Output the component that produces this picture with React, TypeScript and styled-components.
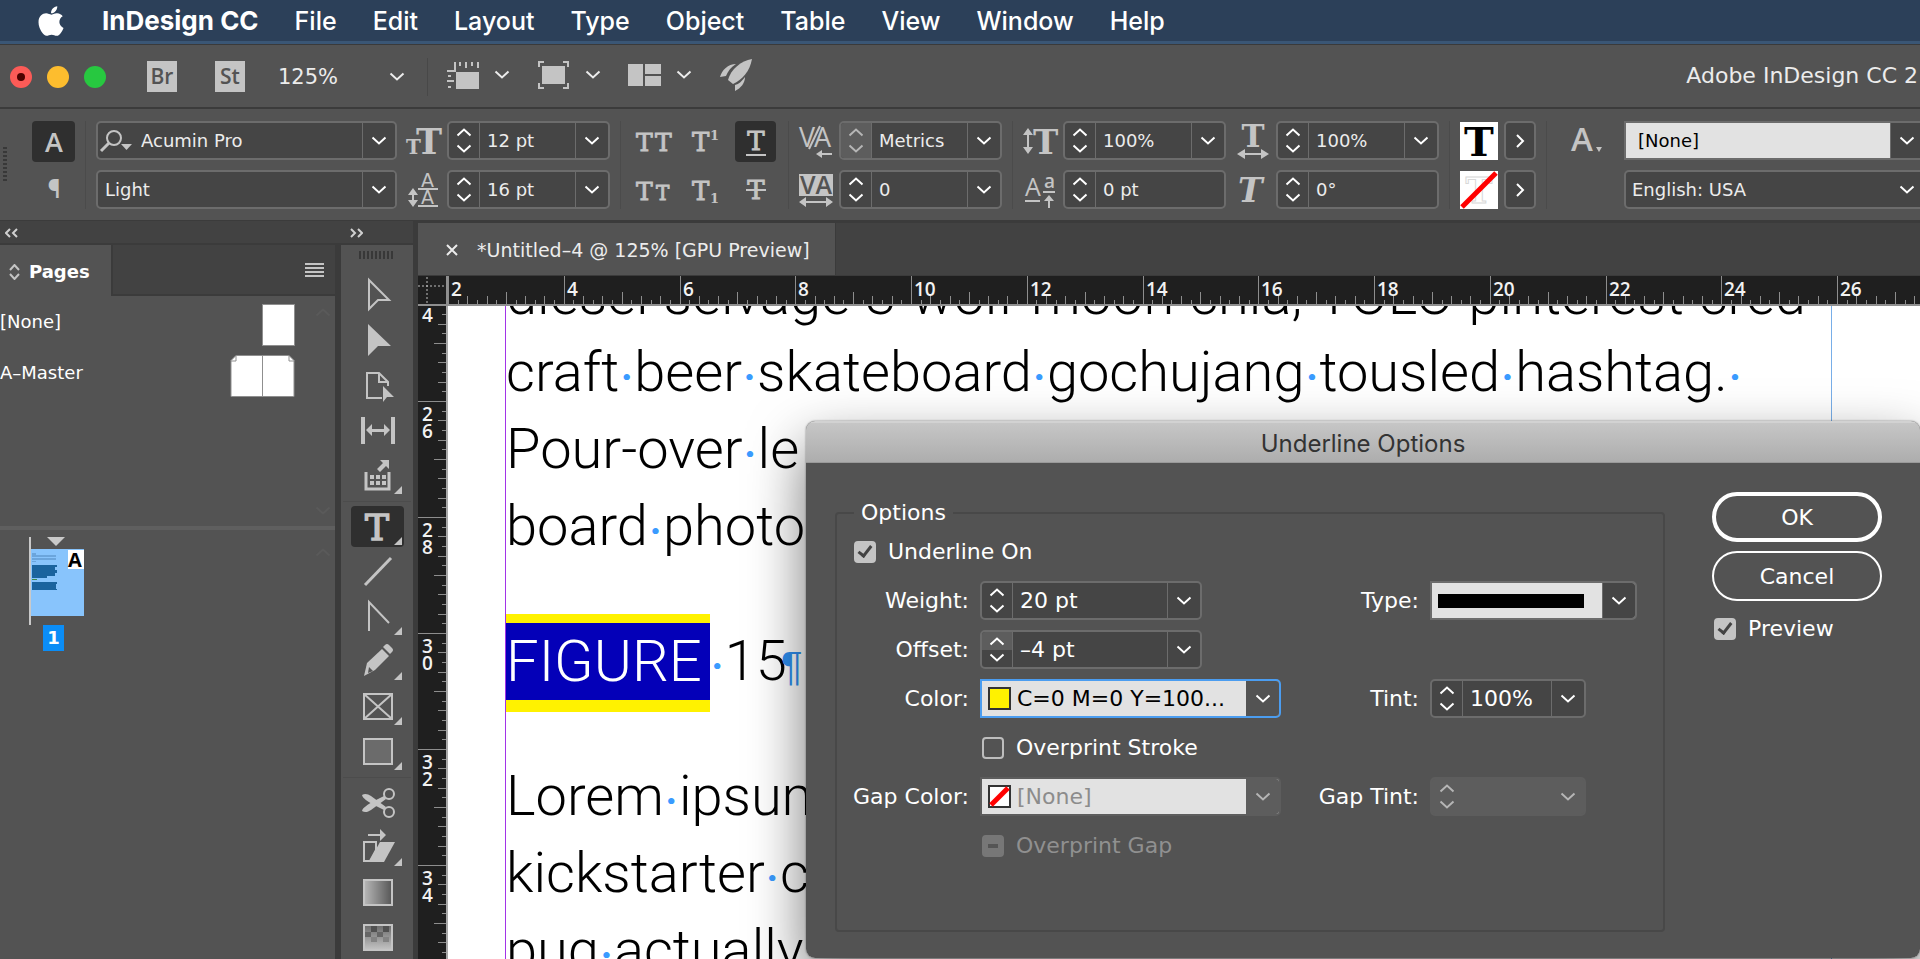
import React from "react";
import styled, { createGlobalStyle, css } from "styled-components";
import { FaApple } from "react-icons/fa";

const UI_FONT = `"DejaVu Sans", "Noto Sans", sans-serif`;
const NARROW_FONT = `"Open Sans", "Noto Sans", sans-serif`;
const SYSTEM_FONT = `Inter, Roboto, sans-serif`;
const ICON_SERIF = `"DejaVu Serif", "Liberation Serif", serif`;

const color = {
  panel: "#535353",
  well: "#424242",
  field: "#454545",
  line: "#3b3b3b",
  border: "#6c6c6c",
  icon: "#c4c4c4",
  text: "#ececec",
  active: "#2f2f2f",
  light: "#e2e2e2",
};

const GlobalStyle = createGlobalStyle`
  *, *::before, *::after { box-sizing: border-box; }
  body { margin: 0; background: ${color.panel}; overflow: hidden; }
  button, input, select { font: inherit; color: inherit; margin: 0; }
  button { border: 0; padding: 0; background: none; }
`;

const Shell = styled.div`
  display: flex;
  flex-direction: column;
  height: 100vh;
  overflow: hidden;
  background: ${color.panel};
  color: ${color.text};
  font-family: ${UI_FONT};
  font-size: 18px;
  line-height: 26px;
`;

/* ---------- system menu bar ---------- */

const MenuBar = styled.nav`
  display: flex;
  flex: none;
  align-items: center;
  gap: 36px;
  height: 44px;
  padding: 1px 0 0 36px;
  background: #2c4059;
  border-bottom: 3px solid #3a5675;
  color: #fff;
  font-family: ${SYSTEM_FONT};
  font-size: 25px;
  font-weight: 500;
  white-space: nowrap;
`;

const AppleMenu = styled.button`
  display: flex;
  width: 30px;
  font-size: 34px;
`;

const MenuItem = styled.button<{ $bold?: boolean }>`
  ${(p) => p.$bold && "font-size: 26px; font-weight: 700;"}
`;

/* ---------- application bar ---------- */

const AppBar = styled.header`
  display: flex;
  flex: none;
  align-items: center;
  height: 65px;
  padding: 1px 2px 0 10px;
  border-top: 1px solid #3a3a3a;
  border-bottom: 2px solid ${color.line};
`;

const WindowButtons = styled.div`
  display: flex;
  gap: 15px;
  margin-right: 41px;
`;

const WindowButton = styled.button<{ $fill: string; $dot?: boolean }>`
  display: grid;
  place-items: center;
  width: 22px;
  height: 22px;
  border-radius: 50%;
  background: ${(p) => p.$fill};
  ${(p) =>
    p.$dot &&
    css`
      &::after {
        content: "";
        width: 8px;
        height: 8px;
        border-radius: 50%;
        background: #4d0200;
      }
    `}
`;

const AppLinks = styled.div`
  display: flex;
  gap: 38px;
  margin-right: 33px;
`;

const AppLink = styled.button`
  width: 30px;
  height: 31px;
  background: ${color.icon};
  color: ${color.panel};
  font-family: ${NARROW_FONT};
  font-size: 21px;
  font-weight: 600;
  line-height: 31px;
`;

const ZoomBox = styled.div`
  display: grid;
  grid-template-columns: 1fr 14px;
  align-items: center;
  width: 125px;
  margin-right: 24px;
  font-size: 21px;
`;

const BareSelect = styled.select`
  grid-column: 1 / -1;
  grid-row: 1;
  width: 100%;
  padding: 0;
  border: 0;
  background: none;
  appearance: none;
`;

const OverSelect = styled.span`
  display: grid;
  grid-column: 2;
  grid-row: 1;
  place-items: center;
  pointer-events: none;
`;

const BarDivider = styled.i`
  width: 1px;
  height: 38px;
  margin-right: 18px;
  background: #484848;
`;

const ViewTools = styled.div`
  display: flex;
  align-items: center;
  gap: 27px;
  margin-bottom: 3px;
`;

const ViewButton = styled.button`
  display: flex;
  align-items: center;
  gap: 15px;
`;

const WindowTitle = styled.h1`
  margin: 0 0 2px auto;
  font-size: 22px;
  font-weight: 400;
  white-space: nowrap;
`;

/* ---------- control panel ---------- */

const ControlBar = styled.section`
  display: flex;
  flex: none;
  align-items: center;
  height: 112px;
  padding: 1px 0 0 3px;
  border-bottom: 1px solid ${color.line};
`;

const Grip = styled.i<{ $vertical?: boolean }>`
  flex: none;
  ${(p) =>
    p.$vertical
      ? css`
          width: 4px;
          height: 36px;
          margin-right: 25px;
          background: repeating-linear-gradient(#383838 0 2px, transparent 2px 4px);
        `
      : css`
          width: 36px;
          height: 8px;
          margin: 6px 0 14px;
          background: repeating-linear-gradient(90deg, #383838 0 2px, transparent 2px 4px);
        `}
`;

const Column = styled.div<{ $width?: number; $grow?: boolean }>`
  display: grid;
  grid-template-rows: 39px 39px;
  gap: 10px;
  flex: ${(p) => (p.$grow ? "1 1 0" : "none")};
  width: ${(p) => (p.$width ? `${p.$width}px` : "auto")};
  ${(p) => p.$grow && "margin-right: -5px;"}
`;

const IconColumn = styled(Column)<{ $before?: number; $after?: number }>`
  place-items: center;
  margin-left: ${(p) => p.$before ?? 0}px;
  margin-right: ${(p) => p.$after ?? 6}px;
`;

const Rule = styled.i`
  flex: none;
  width: 1px;
  height: 88px;
  margin: 0 10px;
  background: #4b4b4b;
`;

const ToggleGrid = styled.div`
  display: grid;
  grid-template: 39px 39px / repeat(3, 41px);
  gap: 10px;
  padding: 0 2px;
`;

const Toggle = styled.button<{ $on?: boolean }>`
  display: grid;
  place-items: center;
  width: 100%;
  height: 41px;
  border-radius: 4px;
  background: ${(p) => (p.$on ? color.active : "none")};
`;

/* ---------- fields ---------- */

const FieldBox = styled.div<{ $disabled?: boolean; $width?: number; $light?: boolean; $focus?: boolean }>`
  display: flex;
  width: ${(p) => (p.$width ? `${p.$width}px` : "100%")};
  height: 39px;
  overflow: hidden;
  border: 2px solid ${(p) => (p.$focus ? "#4b9df0" : p.$disabled ? "#5d5d5d" : color.border)};
  border-radius: ${(p) => (p.$light ? "0 5px 5px 0" : "5px")};
  background: ${(p) => (p.$disabled ? "#5d5d5d" : color.field)};
`;

const TextInput = styled.input<{ $pad?: number }>`
  flex: 1;
  min-width: 0;
  padding: 1px 0 0 ${(p) => p.$pad ?? 7}px;
  border: 0;
  background: none;
`;

const Stepper = styled.div<{ $dim?: boolean; $line?: boolean }>`
  display: grid;
  grid-template-rows: 1fr 1fr;
  flex: none;
  width: 31px;
  border-right: 1px solid ${(p) => (p.$line === false ? "transparent" : color.border)};
  background: ${(p) => (p.$dim ? "#5d5d5d" : "none")};
  color: ${(p) => (p.$dim ? "#b5b5b5" : "#fff")};
`;

const StepButton = styled.button<{ $hot?: boolean }>`
  display: grid;
  place-items: center;
  background: ${(p) => (p.$hot ? "#5d5d5d" : "none")};
`;

const DropButton = styled.button<{ $line?: boolean; $dim?: boolean }>`
  display: grid;
  flex: none;
  place-items: center;
  width: 33px;
  border-left: 1px solid ${(p) => (p.$line === false ? "transparent" : color.border)};
  color: ${(p) => (p.$dim ? "#b5b5b5" : "#fff")};
`;

const SelectGrid = styled.div`
  display: grid;
  grid-template-columns: 1fr 33px;
  flex: 1;
`;

const FieldSelect = styled(BareSelect)<{ $pad: number; $light?: boolean; $muted?: boolean }>`
  height: 35px;
  padding: 1px 0 0 ${(p) => p.$pad}px;
  border-radius: 0;
  opacity: 1;
  ${(p) =>
    p.$light &&
    css`
      background: ${color.light};
      color: ${p.$muted ? "#8c8c8c" : "#000"};
    `}
`;

const SelectArrow = styled(OverSelect)<{ $fill: string; $line?: boolean; $dim?: boolean }>`
  border-left: 1px solid ${(p) => (p.$line ? color.border : "transparent")};
  background: ${(p) => p.$fill};
  color: ${(p) => (p.$dim ? "#b5b5b5" : "#fff")};
`;

const SelectMark = styled.span`
  display: flex;
  grid-column: 1;
  grid-row: 1;
  align-items: center;
  padding-left: 6px;
  pointer-events: none;
`;

const StrokeSample = styled.i`
  width: 146px;
  height: 14px;
  background: #000;
`;

const SearchMark = styled.span`
  display: flex;
  align-items: center;
  padding-left: 2px;
`;

const FlyoutButton = styled.button`
  display: grid;
  place-items: center;
  width: 32px;
  height: 39px;
  border: 2px solid ${color.border};
  border-radius: 5px;
  background: ${color.field};
`;

/* ---------- workspace ---------- */

const Workspace = styled.div`
  display: flex;
  flex: 1;
  min-height: 0;
`;

const Dock = styled.aside`
  display: flex;
  flex: none;
  flex-direction: column;
  width: 418px;
  border-right: 5px solid ${color.line};
`;

const DockHeader = styled.div`
  display: flex;
  flex: none;
  align-items: center;
  justify-content: space-between;
  height: 24px;
  padding: 1px 50px 0 5px;
  border-bottom: 2px solid ${color.line};
  background: ${color.well};
`;

const DockBody = styled.div`
  display: flex;
  flex: 1;
  min-height: 0;
`;

const PagesPanel = styled.section`
  display: flex;
  flex-direction: column;
  width: 335px;
`;

const PanelTabs = styled.div`
  display: flex;
  flex: none;
  height: 51px;
`;

const PanelTab = styled.button`
  display: flex;
  align-items: center;
  gap: 9px;
  width: 111px;
  padding: 3px 0 0 9px;
  color: #fff;
  font-weight: 700;
`;

const TabSpace = styled.div`
  display: flex;
  flex: 1;
  align-items: center;
  justify-content: flex-end;
  padding: 4px 11px 0 0;
  border-left: 2px solid ${color.line};
  border-bottom: 2px solid ${color.line};
  background: ${color.well};
`;

const Masters = styled.div`
  display: flex;
  height: 230px;
  padding: 3px 3px 0 0;
`;

const MasterList = styled.ul`
  flex: 1;
  margin: 0;
  padding: 0;
  list-style: none;
`;

const MasterRow = styled.li`
  display: flex;
  align-items: center;
  justify-content: space-between;
  height: 51px;
  color: #fff;
`;

const MasterName = styled.span`
  padding-bottom: 6px;
`;

const ScrollHints = styled.div`
  display: flex;
  flex-direction: column;
  justify-content: space-between;
  width: 37px;
  padding: 8px 0 10px 20px;
  color: #5a5a5a;
`;

const PagesSplit = styled.hr`
  width: 100%;
  height: 4px;
  margin: 0;
  border: 0;
  background: #5f5f5f;
`;

const PageArea = styled.div`
  display: flex;
  justify-content: space-between;
  padding: 7px 3px 0 29px;
`;

const NextPageHint = styled.div`
  width: 17px;
  padding-top: 1px;
  color: #5a5a5a;
`;

const PageItem = styled.div`
  display: flex;
  flex-direction: column;
  align-items: flex-start;
`;

const PageNumber = styled.span`
  width: 21px;
  margin-left: 14px;
  background: #0b8df6;
  color: #fff;
  font-weight: 700;
  text-align: center;
`;

const ToolPanel = styled.div`
  display: flex;
  flex: 1;
  flex-direction: column;
  align-items: center;
  border-left: 6px solid ${color.line};
`;

const ToolGroup = styled.div`
  display: flex;
  flex: none;
  flex-direction: column;
  align-items: center;
  width: 68px;
  & + & {
    margin-top: 3px;
    padding-top: 2px;
    border-top: 1px solid #4c4c4c;
  }
`;

const ToolButton = styled.button<{ $on?: boolean }>`
  display: grid;
  place-items: center;
  width: 53px;
  height: 41px;
  margin: 2px 0;
  border-radius: 4px;
  background: ${(p) => (p.$on ? color.active : "none")};
`;

/* ---------- document ---------- */

const DocumentArea = styled.main`
  position: relative;
  display: flex;
  flex: 1;
  flex-direction: column;
  min-width: 0;
  background: ${color.well};
`;

const DocTabs = styled.div`
  display: flex;
  flex: none;
  height: 55px;
  border-top: 2px solid ${color.line};
  border-bottom: 1px solid ${color.line};
`;

const DocTab = styled.div`
  display: flex;
  align-items: center;
  gap: 19px;
  width: 418px;
  padding: 1px 0 0 28px;
  border-right: 1px solid ${color.line};
  background: ${color.panel};
  font-size: 19px;
  white-space: nowrap;
`;

const CloseTab = styled.button`
  display: flex;
`;

const RulerGrid = styled.div`
  display: grid;
  grid-template: 30px 1fr / 30px 1fr;
  flex: 1;
  min-height: 0;
  background: #1f1f1f;
`;

const RulerSvg = styled.svg`
  display: block;
  width: 100%;
  height: 100%;
  overflow: hidden;
  font-family: ${NARROW_FONT};
  font-size: 19px;
  font-weight: 600;
`;

const RulerTrack = styled.div<{ $side?: boolean }>`
  min-width: 0;
  min-height: 0;
  overflow: hidden;
  ${(p) => (p.$side ? "border-right: 2px solid #a9a9a9;" : "border-bottom: 2px solid #8f8f8f;")}
`;

const Page = styled.article`
  min-width: 0;
  min-height: 0;
  overflow: hidden;
  padding-left: 57px;
  background: #fff;
`;

const TextFrame = styled.div`
  width: 1327px;
  height: 100%;
  overflow: hidden;
  border-left: 1px solid #a233e8;
  border-right: 1px solid #78aee8;
  color: #000;
  font-family: Roboto, "Liberation Sans", sans-serif;
  font-size: 56px;
  font-weight: 300;
  line-height: 77px;
  white-space: nowrap;
`;

const Paragraph = styled.p<{ $first?: boolean }>`
  margin: ${(p) => (p.$first ? "-49px" : "0")} 0 58px;
`;

const Dot = styled.span`
  display: inline-block;
  width: 15px;
  color: #3a9bff;
  font-size: 40px;
  font-weight: 700;
  line-height: 50px;
  text-align: center;
`;

const Selection = styled.mark`
  display: inline-block;
  height: 77px;
  padding-right: 8px;
  background: #0400b8;
  box-shadow: 0 -9px #fff200, 0 12px #fff200;
  color: #fff;
  font-size: 58px;
  vertical-align: top;
`;

const Pilcrow = styled.span`
  margin-left: -6px;
  color: #2f8ff0;
  font-family: "Liberation Sans", Arial, sans-serif;
  font-size: 40px;
  font-weight: 400;
  line-height: 50px;
`;

/* ---------- dialog ---------- */

const Dialog = styled.div`
  position: absolute;
  top: 200px;
  right: 0;
  display: flex;
  flex-direction: column;
  width: 1114px;
  height: 537px;
  overflow: hidden;
  border-radius: 9px;
  background: ${color.panel};
  color: #fff;
  font-size: 22px;
`;

const DialogShadow = styled.div`
  position: absolute;
  top: 115px;
  right: 0;
  width: 1114px;
  height: 537px;
  border-radius: 9px;
  box-shadow: 0 24px 56px rgba(0, 0, 0, 0.55), 0 0 2px rgba(0, 0, 0, 0.5);
`;

const ShadowClip = styled.div`
  position: absolute;
  inset: 85px 0 0 30px;
  overflow: hidden;
  pointer-events: none;
`;

const DialogTitle = styled.h2`
  flex: none;
  height: 42px;
  margin: 0;
  padding-top: 1px;
  border-top: 2px solid #d2d2d2;
  border-bottom: 1px solid #9a9a9a;
  background: linear-gradient(#c6c6c6, #adadad);
  color: #333;
  font-family: ${SYSTEM_FONT};
  font-size: 24px;
  font-weight: 400;
  line-height: 40px;
  text-align: center;
`;

const DialogBody = styled.form`
  display: flex;
  flex: 1;
  align-items: flex-start;
  gap: 47px;
  padding: 37px 38px 29px 29px;
`;

const OptionsGroup = styled.fieldset`
  flex: 1;
  height: 432px;
  min-width: 0;
  margin: 0;
  padding: 0 0 0 15px;
  border: 2px solid #484848;
  border-radius: 4px;
`;

const Legend = styled.legend`
  margin-left: 2px;
  padding: 0 7px;
  line-height: 26px;
`;

const OptionsGrid = styled.div`
  display: grid;
  grid-template-columns: 117px 301px 127px 1fr;
  grid-auto-rows: 39px;
  gap: 10px 11px;
  align-items: center;
  margin-top: 6px;
`;

const FieldLabel = styled.label`
  justify-self: end;
  white-space: nowrap;
`;

const CheckLabel = styled.label<{ $from?: number; $span?: number; $dim?: boolean }>`
  display: flex;
  grid-column: ${(p) => `${p.$from ?? 1} / span ${p.$span ?? 1}`};
  align-items: center;
  gap: 12px;
  padding-left: 2px;
  color: ${(p) => (p.$dim ? "#909090" : "#fff")};
`;

const CheckBox = styled.input<{ $mixed?: boolean }>`
  display: grid;
  place-items: center;
  width: 22px;
  height: 22px;
  border: 2px solid #bdbdbd;
  border-radius: 4px;
  appearance: none;
  &:checked {
    border-color: #c4c4c4;
    background: #c4c4c4;
  }
  &:checked::after {
    content: "";
    width: 8px;
    height: 14px;
    margin-bottom: 4px;
    border: solid #434343;
    border-width: 0 3px 3px 0;
    transform: rotate(38deg);
  }
  ${(p) =>
    p.$mixed &&
    css`
      border-color: #777;
      background: #777;
      &::after {
        content: "";
        width: 10px;
        height: 4px;
        background: #555;
      }
    `}
`;

const DialogActions = styled.div`
  display: flex;
  flex: none;
  flex-direction: column;
  gap: 9px;
  width: 170px;
  margin-top: -8px;
`;

const PillButton = styled.button<{ $primary?: boolean }>`
  height: 50px;
  padding-top: 1px;
  border: ${(p) => (p.$primary ? 4 : 2)}px solid #fff;
  border-radius: 25px;
`;

const PreviewRow = styled(CheckLabel)`
  margin-top: 6px;
`;

/* ---------- icons ---------- */

const Drawing = styled.svg`
  overflow: visible;
`;

const Glyph = ({ w, h, children }: { w: number; h: number; children: React.ReactNode }) => (
  <Drawing width={w} height={h} viewBox={`0 0 ${w} ${h}`} fill={color.icon} aria-hidden="true">
    {children}
  </Drawing>
);

const Chevron = ({ up }: { up?: boolean }) => (
  <svg width="16" height="10" viewBox="0 0 16 10" fill="none" stroke="currentColor" strokeWidth="2" aria-hidden="true">
    <path d={up ? "M1.500 8.500 8 2.500l6.500 6" : "M1.500 1.500 8 7.500l6.500-6"} />
  </svg>
);

const stroke = { fill: "none", stroke: color.icon, strokeWidth: 2 };
const slab = { fontFamily: ICON_SERIF, stroke: color.icon, strokeWidth: 0.9 };

const RulersIcon = () => (
  <Glyph w={33} h={28}>
    <rect x="10" y="11" width="23" height="17" />
    <path d="M1 10h8V1" {...stroke} />
    <path d="M14 1v4M20 1v6M26 1v4M32 1v6M2 15h3M1 20h7M2 26h3" {...stroke} />
  </Glyph>
);

const ScreenModeIcon = () => (
  <Glyph w={33} h={28}>
    <rect x="5" y="5" width="23" height="18" />
    <path d="M7 1H2v5M26 1h5v5M7 27H2v-5M26 27h5v-5" {...stroke} />
  </Glyph>
);

const ArrangeIcon = () => (
  <Glyph w={33} h={22}>
    <path d="M0 0h15v22H0zM17 0h16v10H17zM17 12h16v10H17z" />
  </Glyph>
);

const RocketIcon = () => (
  <Glyph w={34} h={34}>
    <path d="M33 1C22 3 12 11 9 22l5 4c9-4 17-13 19-25Z" />
    <path d="M17 6C9 6 3 12 1 19l6-1c2-5 5-9 10-12ZM26 19c-3 4-6 7-10 8v6c6-3 10-8 10-14Z" />
  </Glyph>
);

const SearchIcon = () => (
  <Glyph w={34} h={24}>
    <circle cx="14" cy="9" r="7" {...stroke} />
    <path d="M9 14 1 22" {...stroke} strokeWidth={3} />
    <path d="M21 15h11l-5.500 6z" />
  </Glyph>
);

const SizeIcon = () => (
  <Glyph w={34} h={32}>
    <text x="-1" y="29" fontFamily={ICON_SERIF} fontWeight="700" fontSize="20">T</text>
    <text x="9" y="29" fontFamily={ICON_SERIF} fontWeight="700" fontSize="35">T</text>
  </Glyph>
);

const UpDown = ({ x, y1, y2 }: { x: number; y1: number; y2: number }) => (
  <path d={`M${x} ${y1}l5 7h-4v${y2 - y1 - 14}h4l-5 7-5-7h4v-${y2 - y1 - 14}h-4z`} />
);

const LeadingIcon = () => (
  <Glyph w={34} h={36}>
    <UpDown x={6} y1={16} y2={35} />
    <text x="14" y="15" fontFamily={UI_FONT} fontSize="19">A</text>
    <text x="14" y="32" fontFamily={UI_FONT} fontSize="19">A</text>
    <path d="M11 17h20M11 34h20" {...stroke} />
  </Glyph>
);

const PairIcon = ({ smallSize }: { smallSize: number }) => (
  <Glyph w={38} h={34}>
    <text x="1" y="26" fontSize="25" {...slab}>T</text>
    <text x={smallSize < 25 ? 21 : 20} y="26" fontSize={smallSize} {...slab}>T</text>
  </Glyph>
);

const ScriptIcon = ({ low }: { low?: boolean }) => (
  <Glyph w={38} h={34}>
    <text x="6" y="26" fontSize="26" {...slab}>T</text>
    <text x="24" y={low ? 29 : 15} fontFamily={ICON_SERIF} fontWeight="700" fontSize="13">1</text>
  </Glyph>
);

const LineTIcon = ({ strike }: { strike?: boolean }) => (
  <Glyph w={30} h={34}>
    <text x="15" y="25" textAnchor="middle" fontSize="26" {...slab}>T</text>
    <path d={strike ? "M5 16h20" : "M5 30h20"} {...stroke} />
  </Glyph>
);

const KerningIcon = () => (
  <Glyph w={34} h={36}>
    <text x="0" y="24" fontFamily={NARROW_FONT} fontSize="27">V</text>
    <text x="15" y="24" fontFamily={NARROW_FONT} fontSize="27">A</text>
    <path d="M21 3 10 26" {...stroke} />
    <path d="M17 31l6-4v3h10v2H23v3z" />
  </Glyph>
);

const TrackingIcon = () => (
  <Glyph w={34} h={36}>
    <rect width="34" height="22" y="2" />
    <text x="17" y="22" textAnchor="middle" fontFamily={NARROW_FONT} fontWeight="600" fontSize="25" fill={color.panel}>VA</text>
    <path d="M0 30l7-5v4h20v-4l7 5-7 5v-4H7v4z" />
  </Glyph>
);

const VerticalScaleIcon = () => (
  <Glyph w={34} h={32}>
    <UpDown x={5} y1={3} y2={29} />
    <text x="10" y="29" fontFamily={ICON_SERIF} fontWeight="700" fontSize="34">T</text>
  </Glyph>
);

const HorizontalScaleIcon = () => (
  <Glyph w={34} h={36}>
    <text x="17" y="24" textAnchor="middle" fontFamily={ICON_SERIF} fontWeight="700" fontSize="31">T</text>
    <path d="M1 31l8-5v4h16v-4l8 5-8 5v-4H9v4z" />
  </Glyph>
);

const BaselineIcon = () => (
  <Glyph w={34} h={36}>
    <text x="2" y="24" fontFamily={NARROW_FONT} fontSize="25">A</text>
    <text x="21" y="16" fontFamily={NARROW_FONT} fontWeight="600" fontSize="19">a</text>
    <path d="M2 29h15M20 20h12" {...stroke} />
    <path d="M26 23l5 6h-4v7h-2v-7h-4z" />
  </Glyph>
);

const SkewIcon = () => (
  <Glyph w={34} h={32}>
    <text x="2" y="28" fontFamily={ICON_SERIF} fontStyle="italic" fontWeight="700" fontSize="33">T</text>
  </Glyph>
);

const FillSwatch = () => (
  <Drawing width="38" height="38" viewBox="0 0 38 38" aria-label="Fill">
    <rect width="38" height="38" fill="#fff" />
    <text x="19" y="34" textAnchor="middle" fontFamily={ICON_SERIF} fontWeight="700" fontSize="40">T</text>
  </Drawing>
);

const StrokeSwatch = () => (
  <Drawing width="38" height="38" viewBox="0 0 38 38" aria-label="Stroke">
    <rect width="38" height="38" fill="#fff" />
    <text x="19" y="32" textAnchor="middle" fontFamily={ICON_SERIF} fontWeight="700" fontSize="36" fill="#fff" stroke="#d8d8d8">T</text>
    <path d="M2 36 36 2" stroke="#f00" strokeWidth="5" />
  </Drawing>
);

const CharStyleIcon = () => (
  <Glyph w={36} h={32}>
    <text x="2" y="26" fontFamily={NARROW_FONT} fontWeight="600" fontSize="33">A</text>
    <path d="M27 22h6l-3 5z" />
  </Glyph>
);

const Swatch = ({ none }: { none?: boolean }) => (
  <svg width="23" height="23" viewBox="0 0 23 23" aria-hidden="true">
    <rect x="1" y="1" width="21" height="21" fill={none ? "#fff" : "#fff200"} stroke="#333" strokeWidth="2" />
    {none && <path d="M3 20 20 3" stroke="#f00" strokeWidth="5" />}
  </svg>
);

const DoubleChevron = ({ right }: { right?: boolean }) => (
  <svg width="13" height="10" viewBox="0 0 13 10" fill="none" stroke="#d0d0d0" strokeWidth="2" aria-hidden="true">
    <path d={right ? "M1 1l4 4-4 4M8 1l4 4-4 4" : "M5 1 1 5l4 4M12 1 8 5l4 4"} />
  </svg>
);

const tool = (children: React.ReactNode, corner?: boolean) => (
  <Glyph w={53} h={41}>
    {children}
    {corner && <path d="M51 31v8h-8z" />}
  </Glyph>
);

const tools: { name: string; on?: boolean; art: React.ReactNode }[][] = [
  [
    { name: "Selection", art: tool(<path d="M18 5v29l9-9h11z" {...stroke} />) },
    { name: "Direct Selection", art: tool(<path d="M17 4v32l10-10h13z" />) },
    {
      name: "Page",
      art: tool(
        <>
          <path d="M31 33H16V8h12l9 9v4M28 8v9h9" {...stroke} />
          <path d="M32 21v16l4-5h7z" />
        </>
      ),
    },
    {
      name: "Gap",
      art: tool(
        <>
          <path d="M10 7h4v27h-4zM40 7h4v27h-4z" />
          <path d="M15 20l6-6v5h12v-5l6 6-6 6v-4H21v4z" />
        </>
      ),
    },
    {
      name: "Content Collector",
      art: tool(
        <>
          <path d="M15 17v17h23V17" {...stroke} strokeWidth={3} />
          <path d="M19 20h4v4h-4zM25 20h4v4h-4zM31 20h4v4h-4zM19 26h4v4h-4zM25 26h4v4h-4zM31 26h4v4h-4z" />
          <path d="M29 5h9v9l-3-3-6 6-3-3 6-6z" />
        </>,
        true
      ),
    },
  ],
  [
    {
      name: "Type",
      on: true,
      art: tool(
        <text x="26" y="34" textAnchor="middle" fontSize="36" fontFamily={ICON_SERIF} stroke={color.icon} strokeWidth="1.500">T</text>,
        true
      ),
    },
    { name: "Line", art: tool(<path d="M14 34 40 7" {...stroke} strokeWidth={3} />) },
    { name: "Pen", art: tool(<path d="M18 35V6l20 21" {...stroke} />, true) },
    {
      name: "Pencil",
      art: tool(
        <>
          <path d="M13 35l3-13L31 8l7 7-14 14z" />
          <path d="M32 6l2-2q2-2 4 0l3 3q2 2 0 4l-2 2z" />
          <path d="M18 26l4 4-5 2z" fill={color.panel} />
        </>,
        true
      ),
    },
    {
      name: "Rectangle Frame",
      art: tool(<path d="M13 8h28v25H13zM13 8l28 25M41 8 13 33" {...stroke} />, true),
    },
    { name: "Rectangle", art: tool(<rect x="13" y="8" width="28" height="25" {...stroke} fill="#6b6b6b" />, true) },
  ],
  [
    {
      name: "Scissors",
      art: tool(
        <>
          <circle cx="38" cy="12" r="5" {...stroke} />
          <circle cx="38" cy="30" r="5" {...stroke} />
          <path d="M11 13c3-2 6-1 9 1l15 11-2 3-12-6C17 19 12 17 11 13Z" />
          <path d="M11 29c3 2 6 1 9-1l15-11-2-3-12 6c-4 3-9 5-10 9Z" />
        </>
      ),
    },
    {
      name: "Free Transform",
      art: tool(
        <>
          <path d="M25 15H13v19h6l6-11z" {...stroke} />
          <path d="M29 15h15L33 35H18z" />
          <path d="M17 7h12V2l6 6-6 6V9H17z" />
        </>,
        true
      ),
    },
    {
      name: "Gradient Swatch",
      art: tool(
        <>
          <defs>
            <linearGradient id="swatch">
              <stop offset="0" stopColor="#b8b8b8" />
              <stop offset="1" stopColor="#565656" />
            </linearGradient>
          </defs>
          <rect x="13" y="8" width="28" height="25" {...stroke} fill="url(#swatch)" />
        </>
      ),
    },
    {
      name: "Gradient Feather",
      art: tool(
        <>
          <defs>
            <linearGradient id="feather" x1="0" y1="0" x2="0" y2="1">
              <stop offset="0" stopColor="#6a6a6a" />
              <stop offset="1" stopColor={color.icon} />
            </linearGradient>
          </defs>
          <rect x="13" y="8" width="28" height="25" {...stroke} fill="url(#feather)" />
          <path d="M20 9h6v6h-6zM32 9h6v6h-6z" fill="#505050" />
          <path d="M14 15h6v5h-6zM26 15h6v5h-6z" fill="#666" />
          <path d="M20 20h6v5h-6zM32 20h6v5h-6z" fill="#838383" />
        </>
      ),
    },
  ],
];

const PageThumb = () => (
  <Drawing width="56" height="88" viewBox="0 0 56 88" aria-label="Page 1">
    <rect width="2" height="88" fill="#c9c9c9" />
    <path d="M18 0h18l-9 9z" fill="#c9c9c9" />
    <rect x="2" y="12" width="53" height="67" fill="#88c4fc" />
    <path d="M3 16h4v2h20v2H3zM3 21h24v2H3zM3 24h4v1H3z" fill="#6ba5dc" />
    <path d="M3 28h25v2h-2v3h2v3h-2v3H18v2H3z" fill="#1a639e" />
    <path d="M3 42h5v1H3z" fill="#3f8a4a" />
    <path d="M3 45h25v2h-1v5h1v1H3z" fill="#1a639e" />
    <rect x="39" y="13" width="16" height="19" fill="#fff" />
    <text x="46" y="30" textAnchor="middle" fontFamily={NARROW_FONT} fontWeight="700" fontSize="20">A</text>
  </Drawing>
);

/* ---------- rulers ---------- */

const MAJOR = 1389 / 12;
const SIDE_MAJOR = 116;
const tickLength = (i: number, full: number) => (i % 12 === 0 ? full : i % 6 === 0 ? 12 : i % 2 === 0 ? 8 : 4);

const TopRuler = () => (
  <RulerSvg>
    {Array.from({ length: 300 }, (_, i) => {
      const x = Math.round((i * MAJOR) / 12);
      return <rect key={i} x={x} y={28 - tickLength(i, 28)} width="1" height={tickLength(i, 28)} fill="#8d8d8d" />;
    })}
    {Array.from({ length: 13 }, (_, i) => (
      <text key={i} x={Math.round(i * MAJOR) + 3} y="20" fill="#f2f2f2">
        {2 + i * 2}
      </text>
    ))}
  </RulerSvg>
);

const SideRuler = () => (
  <RulerSvg>
    {Array.from({ length: 200 }, (_, i) => {
      const y = Math.round((i * SIDE_MAJOR) / 12) - 21;
      return <rect key={i} x={28 - tickLength(i, 28)} y={y} width={tickLength(i, 28)} height="1" fill="#8d8d8d" />;
    })}
    {Array.from({ length: 6 }, (_, i) =>
      String(24 + i * 2)
        .split("")
        .map((digit, j) =>
          i + j === 0 ? null : (
            <text key={`${i}-${j}`} x="4" y={i * SIDE_MAJOR + 17 * j - 1} fill="#f2f2f2">
              {digit}
            </text>
          )
        )
    )}
  </RulerSvg>
);

const RulerOrigin = () => (
  <svg width="30" height="30" viewBox="0 0 30 30" aria-hidden="true">
    <path d="M0 10h30M9 1v29" stroke="#c0c0c0" strokeDasharray="2 2" />
    <path d="M29 0v30M0 29h30" stroke="#8f8f8f" strokeWidth="2" />
  </svg>
);

/* ---------- composed fields ---------- */

const Steps = ({ label, dim, hot, line }: { label: string; dim?: boolean; hot?: boolean; line?: boolean }) => (
  <Stepper $dim={dim} $line={line}>
    <StepButton type="button" $hot={hot} aria-label={`Increase ${label}`}>
      <Chevron up />
    </StepButton>
    <StepButton type="button" aria-label={`Decrease ${label}`}>
      <Chevron />
    </StepButton>
  </Stepper>
);

interface NumberFieldProps {
  label: string;
  value: string;
  id?: string;
  width?: number;
  drop?: boolean;
  dimSteps?: boolean;
  hot?: boolean;
  disabled?: boolean;
}

const NumberField = ({ label, value, id, width = 163, drop = true, dimSteps, hot, disabled }: NumberFieldProps) => (
  <FieldBox $width={width} $disabled={disabled}>
    <Steps label={label} dim={dimSteps || disabled} hot={hot} line={!disabled} />
    <TextInput id={id} aria-label={id ? undefined : label} defaultValue={value} disabled={disabled} />
    {drop && (
      <DropButton type="button" aria-label={`${label} presets`} $line={!disabled} $dim={disabled}>
        <Chevron />
      </DropButton>
    )}
  </FieldBox>
);

interface SelectFieldProps {
  label: string;
  value: string;
  id?: string;
  width?: number;
  pad?: number;
  light?: boolean;
  line?: boolean;
  focus?: boolean;
  disabled?: boolean;
  mark?: React.ReactNode;
}

const SelectField = ({ label, value, id, width, pad = 7, light, line = true, focus, disabled, mark }: SelectFieldProps) => (
  <FieldBox $width={width} $light={light} $focus={focus} $disabled={disabled}>
    <SelectGrid>
      <FieldSelect id={id} aria-label={id ? undefined : label} $pad={pad} $light={light} $muted={disabled} disabled={disabled}>
        <option>{value}</option>
      </FieldSelect>
      {mark && <SelectMark>{mark}</SelectMark>}
      <SelectArrow $fill={disabled ? "#5d5d5d" : focus ? color.panel : color.field} $line={line} $dim={disabled}>
        <Chevron />
      </SelectArrow>
    </SelectGrid>
  </FieldBox>
);

const withDots = (line: string) =>
  line.split("·").map((word, i) => (
    <React.Fragment key={i}>
      {i > 0 && <Dot>·</Dot>}
      {word}
    </React.Fragment>
  ));

const menus = ["File", "Edit", "Layout", "Type", "Object", "Table", "View", "Window", "Help"];

export default function App() {
  return (
    <Shell>
      <GlobalStyle />
      <MenuBar>
        <AppleMenu aria-label="Apple menu">
          <FaApple />
        </AppleMenu>
        <MenuItem $bold>InDesign CC</MenuItem>
        {menus.map((m) => (
          <MenuItem key={m}>{m}</MenuItem>
        ))}
      </MenuBar>

      <AppBar>
        <WindowButtons>
          <WindowButton $fill="#fc5b57" $dot aria-label="Close" />
          <WindowButton $fill="#fdbd2e" aria-label="Minimize" />
          <WindowButton $fill="#27c840" aria-label="Zoom" />
        </WindowButtons>
        <AppLinks>
          <AppLink>Br</AppLink>
          <AppLink>St</AppLink>
        </AppLinks>
        <ZoomBox>
          <BareSelect aria-label="Zoom level">
            <option>125%</option>
          </BareSelect>
          <OverSelect>
            <Chevron />
          </OverSelect>
        </ZoomBox>
        <BarDivider />
        <ViewTools>
          <ViewButton aria-label="View options">
            <RulersIcon />
            <Chevron />
          </ViewButton>
          <ViewButton aria-label="Screen mode">
            <ScreenModeIcon />
            <Chevron />
          </ViewButton>
          <ViewButton aria-label="Arrange documents">
            <ArrangeIcon />
            <Chevron />
          </ViewButton>
          <ViewButton aria-label="Publish">
            <RocketIcon />
          </ViewButton>
        </ViewTools>
        <WindowTitle>Adobe InDesign CC 2</WindowTitle>
      </AppBar>

      <ControlBar>
        <Grip $vertical />
        <Column $width={43}>
          <Toggle $on aria-label="Character controls">
            <Glyph w={32} h={34}>
              <text x="16" y="27" textAnchor="middle" fontFamily={NARROW_FONT} fontWeight="600" fontSize="27">A</text>
            </Glyph>
          </Toggle>
          <Toggle aria-label="Paragraph controls">
            <Glyph w={32} h={34}>
              <text x="16" y="24" textAnchor="middle" fontFamily="Roboto, sans-serif" fontWeight="500" fontSize="26">¶</text>
            </Glyph>
          </Toggle>
        </Column>
        <Rule />
        <Column $width={301}>
          <FieldBox>
            <SearchMark>
              <SearchIcon />
            </SearchMark>
            <TextInput aria-label="Font family" defaultValue="Acumin Pro" />
            <DropButton aria-label="Font list">
              <Chevron />
            </DropButton>
          </FieldBox>
          <SelectField label="Font style" value="Light" />
        </Column>
        <IconColumn $width={34} $before={10}>
          <SizeIcon />
          <LeadingIcon />
        </IconColumn>
        <Column>
          <NumberField label="Font size" value="12 pt" />
          <NumberField label="Leading" value="16 pt" />
        </Column>
        <Rule />
        <ToggleGrid>
          <Toggle aria-label="All caps">
            <PairIcon smallSize={25} />
          </Toggle>
          <Toggle aria-label="Superscript">
            <ScriptIcon />
          </Toggle>
          <Toggle $on aria-label="Underline">
            <LineTIcon />
          </Toggle>
          <Toggle aria-label="Small caps">
            <PairIcon smallSize={20} />
          </Toggle>
          <Toggle aria-label="Subscript">
            <ScriptIcon low />
          </Toggle>
          <Toggle aria-label="Strikethrough">
            <LineTIcon strike />
          </Toggle>
        </ToggleGrid>
        <Rule />
        <IconColumn $width={34}>
          <KerningIcon />
          <TrackingIcon />
        </IconColumn>
        <Column>
          <NumberField label="Kerning" value="Metrics" dimSteps />
          <NumberField label="Tracking" value="0" />
        </Column>
        <Rule />
        <IconColumn $width={34}>
          <VerticalScaleIcon />
          <BaselineIcon />
        </IconColumn>
        <Column>
          <NumberField label="Vertical scale" value="100%" />
          <NumberField label="Baseline shift" value="0 pt" drop={false} />
        </Column>
        <IconColumn $width={34} $before={10}>
          <HorizontalScaleIcon />
          <SkewIcon />
        </IconColumn>
        <Column>
          <NumberField label="Horizontal scale" value="100%" />
          <NumberField label="Skew" value="0°" drop={false} />
        </Column>
        <Rule />
        <IconColumn $width={38}>
          <FillSwatch />
          <StrokeSwatch />
        </IconColumn>
        <Column>
          {["Fill options", "Stroke options"].map((name) => (
            <FlyoutButton key={name} aria-label={name}>
              <svg width="9" height="16" viewBox="0 0 9 16" fill="none" stroke="#fff" strokeWidth="2" aria-hidden="true">
                <path d="M1 2l6 6-6 6" />
              </svg>
            </FlyoutButton>
          ))}
        </Column>
        <Rule />
        <IconColumn $width={36} $before={12} $after={19}>
          <CharStyleIcon />
        </IconColumn>
        <Column $grow>
          <SelectField label="Character style" value="[None]" pad={12} light />
          <SelectField label="Language" value="English: USA" pad={6} line={false} />
        </Column>
      </ControlBar>

      <Workspace>
        <Dock>
          <DockHeader>
            <DoubleChevron />
            <DoubleChevron right />
          </DockHeader>
          <DockBody>
            <PagesPanel>
              <PanelTabs>
                <PanelTab>
                  <svg width="11" height="16" viewBox="0 0 11 16" {...stroke} aria-hidden="true">
                    <path d="M1 6l4.500-5L10 6M1 10l4.500 5 4.500-5" />
                  </svg>
                  Pages
                </PanelTab>
                <TabSpace>
                  <button aria-label="Panel menu">
                    <Glyph w={19} h={15}>
                      <path d="M0 0h19v2H0zM0 4h19v2H0zM0 8h19v2H0zM0 12h19v2H0z" />
                    </Glyph>
                  </button>
                </TabSpace>
              </PanelTabs>
              <Masters>
                <MasterList>
                  <MasterRow>
                    <MasterName>[None]</MasterName>
                    <svg width="33" height="42" viewBox="0 0 33 42" aria-hidden="true">
                      <rect x="0.500" y="0.500" width="32" height="41" fill="#fff" stroke="#8f8f8f" />
                    </svg>
                  </MasterRow>
                  <MasterRow>
                    <MasterName>A–Master</MasterName>
                    <svg width="65" height="42" viewBox="0 0 65 42" aria-hidden="true">
                      <path d="M6 .5h53l5 5v36H1v-36z" fill="#fff" stroke="#8f8f8f" />
                      <path d="M6 1v5H1M59 1v5h5M32.500 1v40" fill="none" stroke="#8f8f8f" />
                    </svg>
                  </MasterRow>
                </MasterList>
                <ScrollHints>
                  <Chevron up />
                  <Chevron />
                </ScrollHints>
              </Masters>
              <PagesSplit />
              <PageArea>
                <PageItem>
                  <PageThumb />
                  <PageNumber>1</PageNumber>
                </PageItem>
                <NextPageHint>
                  <Chevron up />
                </NextPageHint>
              </PageArea>
            </PagesPanel>
            <ToolPanel>
              <Grip />
              {tools.map((group, g) => (
                <ToolGroup key={g}>
                  {group.map((t) => (
                    <ToolButton key={t.name} $on={t.on} aria-label={`${t.name} tool`}>
                      {t.art}
                    </ToolButton>
                  ))}
                </ToolGroup>
              ))}
            </ToolPanel>
          </DockBody>
        </Dock>

        <DocumentArea>
          <DocTabs>
            <DocTab>
              <CloseTab aria-label="Close document">
                <svg width="12" height="12" viewBox="0 0 12 12" stroke="#ececec" strokeWidth="2" aria-hidden="true">
                  <path d="M1 1l10 10M11 1 1 11" />
                </svg>
              </CloseTab>
              *Untitled–4 @ 125% [GPU Preview]
            </DocTab>
          </DocTabs>
          <RulerGrid>
            <RulerOrigin />
            <RulerTrack>
              <TopRuler />
            </RulerTrack>
            <RulerTrack $side>
              <SideRuler />
            </RulerTrack>
            <Page>
              <TextFrame>
                <Paragraph $first>
                  {withDots("diesel·selvage·3·wolf·moon·chia,·YOLO·pinterest·cred")}
                  <br />
                  {withDots("craft·beer·skateboard·gochujang·tousled·hashtag.·")}
                  <br />
                  {withDots("Pour-over·le")}
                  <br />
                  {withDots("board·photo")}
                </Paragraph>
                <Paragraph>
                  <Selection>FIGURE</Selection>
                  <Dot>·</Dot>15<Pilcrow>¶</Pilcrow>
                </Paragraph>
                <Paragraph>
                  {withDots("Lorem·ipsum")}
                  <br />
                  {withDots("kickstarter·c")}
                  <br />
                  {withDots("pug·actually")}
                </Paragraph>
              </TextFrame>
            </Page>
          </RulerGrid>

          <ShadowClip>
            <DialogShadow />
          </ShadowClip>
          <Dialog role="dialog" aria-labelledby="dialog-title">
            <DialogTitle id="dialog-title">Underline Options</DialogTitle>
            <DialogBody onSubmit={(e) => e.preventDefault()}>
              <OptionsGroup>
                <Legend>Options</Legend>
                <OptionsGrid>
                  <CheckLabel $span={4}>
                    <CheckBox type="checkbox" defaultChecked />
                    Underline On
                  </CheckLabel>

                  <FieldLabel htmlFor="weight">Weight:</FieldLabel>
                  <NumberField id="weight" label="Weight" value="20 pt" width={222} />
                  <FieldLabel htmlFor="type">Type:</FieldLabel>
                  <SelectField id="type" label="Type" value="" width={207} light mark={<StrokeSample />} />

                  <FieldLabel htmlFor="offset">Offset:</FieldLabel>
                  <NumberField id="offset" label="Offset" value="–4 pt" width={222} hot />
                  <span />
                  <span />

                  <FieldLabel htmlFor="color">Color:</FieldLabel>
                  <SelectField id="color" label="Color" value="C=0 M=0 Y=100..." pad={35} light focus line={false} mark={<Swatch />} />
                  <FieldLabel htmlFor="tint">Tint:</FieldLabel>
                  <NumberField id="tint" label="Tint" value="100%" width={156} />

                  <CheckLabel $from={2} $span={3}>
                    <CheckBox type="checkbox" />
                    Overprint Stroke
                  </CheckLabel>

                  <FieldLabel htmlFor="gap-color">Gap Color:</FieldLabel>
                  <SelectField id="gap-color" label="Gap color" value="[None]" pad={35} light disabled line={false} mark={<Swatch none />} />
                  <FieldLabel htmlFor="gap-tint">Gap Tint:</FieldLabel>
                  <NumberField id="gap-tint" label="Gap tint" value="" width={156} disabled />

                  <CheckLabel $from={2} $span={3} $dim>
                    <CheckBox type="checkbox" $mixed disabled />
                    Overprint Gap
                  </CheckLabel>
                </OptionsGrid>
              </OptionsGroup>
              <DialogActions>
                <PillButton $primary>OK</PillButton>
                <PillButton type="button">Cancel</PillButton>
                <PreviewRow>
                  <CheckBox type="checkbox" defaultChecked />
                  Preview
                </PreviewRow>
              </DialogActions>
            </DialogBody>
          </Dialog>
        </DocumentArea>
      </Workspace>
    </Shell>
  );
}
